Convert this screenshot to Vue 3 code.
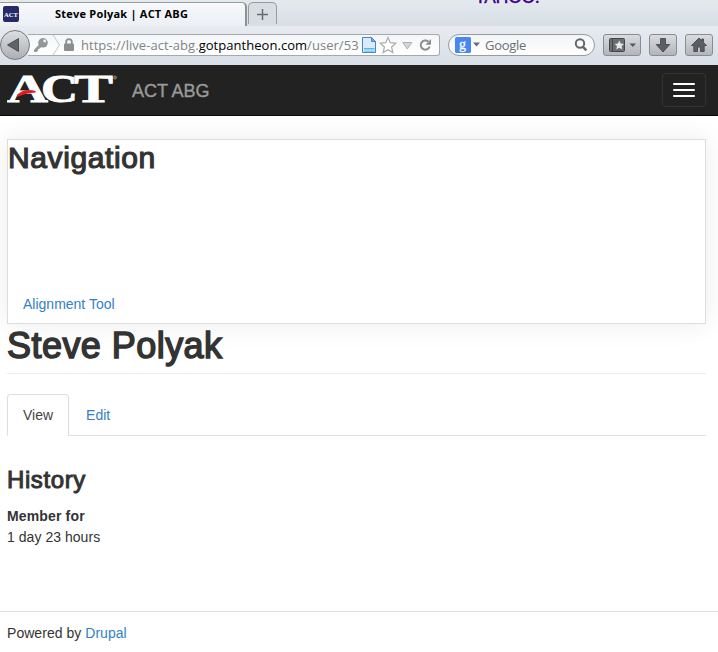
<script setup>
const tabs = ['View', 'Edit']
</script>

<template>
  <div class="page">
    <div class="chrome">
      <div class="tabstrip">
        <div class="btab">
          <svg class="fav" width="16" height="16" viewBox="0 0 16 16">
            <rect width="16" height="16" rx="2" fill="#262a68" />
            <text x="1" y="10.500" textLength="14" lengthAdjust="spacingAndGlyphs" class="favtext">ACT</text>
          </svg>
          <span class="btitle">Steve Polyak | ACT ABG</span>
        </div>
        <div class="newtab">
          <svg width="11" height="11" viewBox="0 0 11 11"><path d="M5.500 0v11M0 5.500h11" stroke="#66696d" stroke-width="1.500" /></svg>
        </div>
        <span class="yahoo">YAHOO!</span>
      </div>
      <div class="toolbar">
        <div class="back">
          <svg width="30" height="30" viewBox="0 0 30 30"><path d="M7.500 15L18.500 8.500v13z" fill="#606367" stroke="#3e4145" stroke-width=".8" /></svg>
        </div>
        <div class="urlbar">
          <svg class="key" width="44" height="20" viewBox="0 0 44 20">
            <path d="M3 14.700L9.200 8.500 11.700 10.800 9.600 12.800 8.500 12.800 8.500 14 7.200 14 7.200 15.300 5.700 17 3 17z" fill="#94979a" />
            <circle cx="12" cy="7.800" r="4.800" fill="#94979a" /><circle cx="13.700" cy="6" r="1.400" fill="#f3f4f6" />
            <path d="M21.500 -1L28.500 10 21.500 21" fill="none" stroke="#c4c7cb" />
            <rect x="33" y="8.500" width="10" height="7.500" rx="1" fill="#8c8e91" />
            <path d="M35.200 9V7a2.800 2.800 0 0 1 5.600 0v2" fill="none" stroke="#8c8e91" stroke-width="1.800" />
          </svg>
          <span class="url">https://live-act-abg.<b>gotpantheon.com</b>/user/53</span>
          <svg class="urlicons" width="74" height="20" viewBox="0 0 74 20">
            <path d="M2.500 2.500h9l4 4v11h-13z" fill="#dcebfa" stroke="#4784c8" />
            <path d="M11.500 2.500v4h4z" fill="#78ade3" stroke="#4784c8" />
            <rect x="4" y="13" width="10.500" height="1.500" fill="#51baf0" /><rect x="4" y="15.500" width="10.500" height="1.500" fill="#8acbef" />
            <path d="M28 2.500l2.300 5.200 5.400.5-4.100 3.800 1.200 5.500L28 14.700l-4.800 2.800 1.200-5.500-4.100-3.800 5.400-.5z" fill="#fff" stroke="#a9abad" stroke-width="1.200" />
            <path d="M42.800 7.500h9L47.300 14z" fill="#d5d6d7" stroke="#b0b1b3" />
            <path d="M69.700 11.500a4.600 4.600 0 1 1-1.400-5" fill="none" stroke="#8b8d90" stroke-width="2" />
            <path d="M71 4v5.700h-5.700z" fill="#8b8d90" />
          </svg>
        </div>
        <div class="search">
          <svg width="26" height="16" viewBox="0 0 26 16">
            <rect width="16" height="16" rx="1.500" fill="#4a86f2" />
            <text x="4" y="11.500" class="gletter">g</text>
            <path d="M18 5.500h7L21.500 9.500z" fill="#6b6e71" />
          </svg>
          <span class="gtext">Google</span>
          <svg class="mag" width="14" height="14" viewBox="0 0 14 14"><circle cx="6" cy="5.500" r="4.200" fill="none" stroke="#646669" stroke-width="2" /><path d="M8.700 8.500L12.300 12.300" stroke="#646669" stroke-width="2.500" /></svg>
        </div>
        <div class="btn book">
          <svg width="36" height="20" viewBox="0 0 36 20">
            <rect x="5.500" y="3.500" width="15" height="13" rx="1" fill="#6b6e71" stroke="#45484b" />
            <path d="M8.500 4v12" stroke="#45484b" />
            <path d="M15.300 5.500l1.400 3 3.300.4-2.400 2.200.7 3.400-3-1.700-3 1.700.7-3.400-2.400-2.200 3.300-.4z" fill="#e7e8ea" />
            <path d="M25.500 8.500h6.500L28.800 12z" fill="#55585b" />
          </svg>
        </div>
        <div class="btn down">
          <svg width="26" height="20" viewBox="0 0 26 20"><path d="M10.500 3.500h5v6h4.300L13 17 6.200 9.500h4.300z" fill="#5c5f62" stroke="#3f4245" stroke-width=".8" /></svg>
        </div>
        <div class="btn home">
          <svg width="26" height="20" viewBox="0 0 26 20"><path d="M13 3L5.500 10.500h2.300V16.500h3.700v-4.500h3v4.500h3.700v-6h2.300L17.500 7.400V4h-1.700v1.700z" fill="#5c5f62" stroke="#3f4245" stroke-width=".8" /></svg>
        </div>
      </div>
    </div>

    <nav class="navbar">
      <svg class="logo" width="112" height="50" viewBox="0 -9 112 50">
        <g class="logotext">
          <text x="0" y="28" textLength="41" lengthAdjust="spacingAndGlyphs">A</text>
          <text x="34" y="28" textLength="37" lengthAdjust="spacingAndGlyphs">C</text>
          <text x="67" y="28" textLength="39" lengthAdjust="spacingAndGlyphs">T</text>
        </g>
        <path d="M11.500 21.500Q16 15 28.500 17.700Q20 17.700 11.500 21.500z" fill="#e01b22" stroke="#e01b22" stroke-width="1.600" />
        <circle cx="108" cy="3.500" r="1.500" fill="#555" stroke="#999" stroke-width=".8" />
      </svg>
      <span class="brand">ACT ABG</span>
      <div class="burger"><i></i><i></i><i></i></div>
    </nav>

    <main>
      <section class="box">
        <h2>Navigation</h2>
        <a>Alignment Tool</a>
      </section>
      <h1>Steve Polyak</h1>
      <div class="tabs">
        <div v-for="(t, i) in tabs" :key="t" class="tab" :class="{ active: i === 0 }">{{ t }}</div>
      </div>
      <h3>History</h3>
      <div class="label">Member for</div>
      <div class="value">1 day 23 hours</div>
    </main>
    <footer>Powered by <a>Drupal</a></footer>
  </div>
</template>

<style>
body { background: #fff; }
</style>

<style scoped>
* { box-sizing: border-box; }
.page { width: 718px; height: 652px; overflow: hidden; font: 14px/21px "Liberation Sans", Arial, sans-serif; color: #333; }
svg { display: block; flex: none; }
.chrome { font-family: "Open Sans", "Noto Sans", sans-serif; position: relative; z-index: 1; }
.tabstrip { height: 26px; display: flex; position: relative; background: linear-gradient(#e3eaec, #d8dee6); overflow: hidden; }
.btab { width: 247px; height: 25px; margin-top: 2px; border-top: 1px solid #9a9da1; border-right: 2px solid #8d9094; border-radius: 0 5px 0 0; background: linear-gradient(#f7f9fb, #ebeff4); display: flex; align-items: center; padding: 0 0 2px 3px; }
.favtext { font: bold 7px "Liberation Serif", serif; fill: #fff; }
.btitle { margin: -2px 0 0 36px; font-size: 11px; font-weight: 700; color: #000; white-space: nowrap; letter-spacing: 0.22px; }
.newtab { width: 29px; height: 22px; margin: 2px 0 0 1px; border: 1px solid #989ba0; border-bottom: 0; border-radius: 5px 5px 0 0; display: flex; justify-content: center; align-items: center; padding: 1px 0 0 0; background: #d8dde4; }
.yahoo { position: absolute; left: 475px; top: -14px; font: 17px/22px Lato, sans-serif; font-weight: 500; color: #400090; letter-spacing: -0.3px; -webkit-text-stroke: .3px #400090; }
.toolbar { height: 39px; display: flex; align-items: center; background: linear-gradient(#e7ebf0, #d8dfe8); padding-bottom: 1px; }
.back { width: 30px; height: 30px; border-radius: 50%; border: 1px solid #75787c; background: linear-gradient(#dcdee0, #adb0b4); position: relative; z-index: 1; }
.back svg { margin: -1px; }
.urlbar { width: 412px; height: 22px; margin-left: -2px; border: 1px solid #a5a9af; border-left: 0; border-radius: 0 3px 3px 0; background: linear-gradient(#f5f6f8, #fff); display: flex; align-items: center; padding-left: 2px; }
.key { margin-left: 1px; }
.url { margin-left: 6px; width: 279px; font-size: 13px; color: #818386; white-space: nowrap; letter-spacing: 0.04px; }
.url b { font-weight: 400; color: #000; }
.search { margin-left: 8px; width: 147px; height: 22px; border: 1px solid #989ca2; border-radius: 11px; background: linear-gradient(#f3f4f6, #fff); display: flex; align-items: center; padding-left: 6px; }
.gletter { font: 14px "Liberation Serif", serif; fill: #fff; stroke: #fff; stroke-width: .3; }
.gtext { margin-left: 4px; font-size: 13px; color: #6c6f72; letter-spacing: -0.3px; }
.mag { margin-left: auto; margin-right: 6px; }
.btn { height: 22px; border: 1px solid #898c90; border-radius: 3px; background: linear-gradient(#dadcdf, #b2b5b9); flex: none; }
.book { width: 38px; margin-left: 8px; }
.down { width: 28px; margin-left: 8px; }
.home { width: 28px; margin-left: 8px; }
.navbar { height: 51px; background: #222; border-bottom: 1px solid #080808; display: flex; align-items: center; padding: 0 12px 0 7px; position: relative; z-index: 1; }
.logotext { font: bold 39px "Liberation Serif", serif; fill: #fff; stroke: #fff; stroke-width: .8; }
.brand { margin: 2px 0 0 13px; font-size: 18px; color: #999; letter-spacing: -0.05px; -webkit-text-stroke: .4px #999; }
.burger { margin-left: auto; width: 44px; height: 34px; border: 1px solid #333; border-radius: 4px; display: flex; flex-direction: column; justify-content: center; align-items: center; gap: 4px; }
.burger i { width: 22px; height: 2px; background: #fff; border-radius: 1px; }
main { padding: 23px 12px 0 7px; }
.box { height: 185px; border: 1px solid #ddd; background: #fff; box-shadow: 0 0 25px rgba(0, 0, 0, .08); display: flex; flex-direction: column; justify-content: space-between; position: relative; z-index: -1; }
.box h2 { margin: 1px 0 0; font-size: 30px; line-height: 33px; letter-spacing: 0.6px; -webkit-text-stroke: 1.2px #333; }
.box a { padding: 0 0 8px 15px; }
a { color: #337fc7; }
h1, h2, h3 { color: #333; font-weight: 400; }
h1 { margin: 2px 0 0; padding-bottom: 8px; border-bottom: 1px solid #eee; font-size: 36px; line-height: 39px; letter-spacing: 0.45px; -webkit-text-stroke: 1.5px #333; }
.tabs { margin-top: 20px; height: 42px; border-bottom: 1px solid #ddd; display: flex; gap: 1px; }
.tab { height: 42px; padding: 9px 15px; border: 1px solid transparent; line-height: 22px; color: #337fc7; }
.tab.active { border-color: #ddd #ddd #fff; border-radius: 4px 4px 0 0; background: #fff; color: #444; }
h3 { margin: 31px 0 0; font-size: 24px; line-height: 26px; letter-spacing: 0.6px; -webkit-text-stroke: 1px #333; }
.label { margin-top: 13px; font-weight: 700; letter-spacing: 0.15px; }
.value { letter-spacing: 0.04px; }
footer { margin-top: 63px; border-top: 1px solid #ddd; padding: 11px 7px; letter-spacing: 0.04px; }
</style>
